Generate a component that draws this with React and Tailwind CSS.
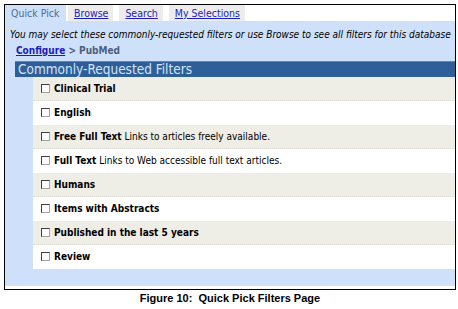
import React from 'react';

const filters = [
  { name: 'Clinical Trial' },
  { name: 'English' },
  { name: 'Free Full Text', note: 'Links to articles freely available.' },
  { name: 'Full Text', note: 'Links to Web accessible full text articles.' },
  { name: 'Humans' },
  { name: 'Items with Abstracts' },
  { name: 'Published in the last 5 years' },
  { name: 'Review' },
];

const tabs = ['Browse', 'Search', 'My Selections'];

function CheckBox() {
  return (
    <span className="inline-block w-[9px] h-[9px] bg-white border border-t-[#404040] border-l-[#404040] border-r-[#a0a0a0] border-b-[#a0a0a0] shrink-0" />
  );
}

export default function App() {
  return (
    <div className="w-[458px] h-[309px] bg-white pt-[4px] pl-[4px] font-['DejaVu_Sans_Condensed','DejaVu_Sans',sans-serif]">
      <div className="w-[452px] h-[286px] border border-black flex flex-col">
        {/* tabs */}
        <div className="flex h-[16px] text-[10.5px] leading-[16px] bg-white">
          <div className="w-[61px] bg-[#cfe1fa] text-[#4b6d91] pl-[6px]">Quick Pick</div>
          <div className="flex gap-[6px] ml-[2px]">
            {tabs.map((t) => (
              <a key={t} className="bg-[#ececec] text-[#1c1cb8] underline pl-[6px] pr-[5px]">{t}</a>
            ))}
          </div>
        </div>

        {/* panel */}
        <div className="flex-1 bg-[#cfe1fa] flex flex-col">
          <p className="italic text-[10px] text-black pl-[5px] mt-[7px] leading-[13px] whitespace-nowrap">
            You may select these commonly-requested filters or use Browse to see all filters for this database
          </p>
          <div className="text-[10px] font-bold pl-[11px] mt-[3px] leading-[13px]">
            <a className="text-[#1c1cb8] underline">Configure</a>
            <span className="text-[#4d5f7f]"> &gt; PubMed</span>
          </div>
          <div className="ml-[10px] mt-[4px] h-[16px] bg-[#2e5f98] border-t border-[#5b86b8] text-[#d3e4fc] text-[13.5px] leading-[14px] pl-[3px]">
            Commonly-Requested Filters
          </div>
          <div className="ml-[28px]">
            {filters.map((f, i) => (
              <div
                key={f.name}
                className={`h-[24px] flex items-center gap-[4px] pl-[8px] text-[10px] text-black border-b border-dotted ${i % 2 === 0 ? 'bg-[#eeede6] border-[#dcdcd4]' : 'bg-white border-white'}`}
              >
                <CheckBox />
                <span>
                  <b>{f.name}</b>
                  {f.note && <span> {f.note}</span>}
                </span>
              </div>
            ))}
          </div>
          <div className="flex-1" />
          <div className="h-[3px] bg-white" />
        </div>
      </div>
      <div className="w-[452px] text-center font-['Liberation_Sans',Arial,sans-serif] font-bold text-[11px] leading-[13px] mt-[2px] text-black">
        Figure 10:&nbsp; Quick Pick Filters Page
      </div>
    </div>
  );
}
